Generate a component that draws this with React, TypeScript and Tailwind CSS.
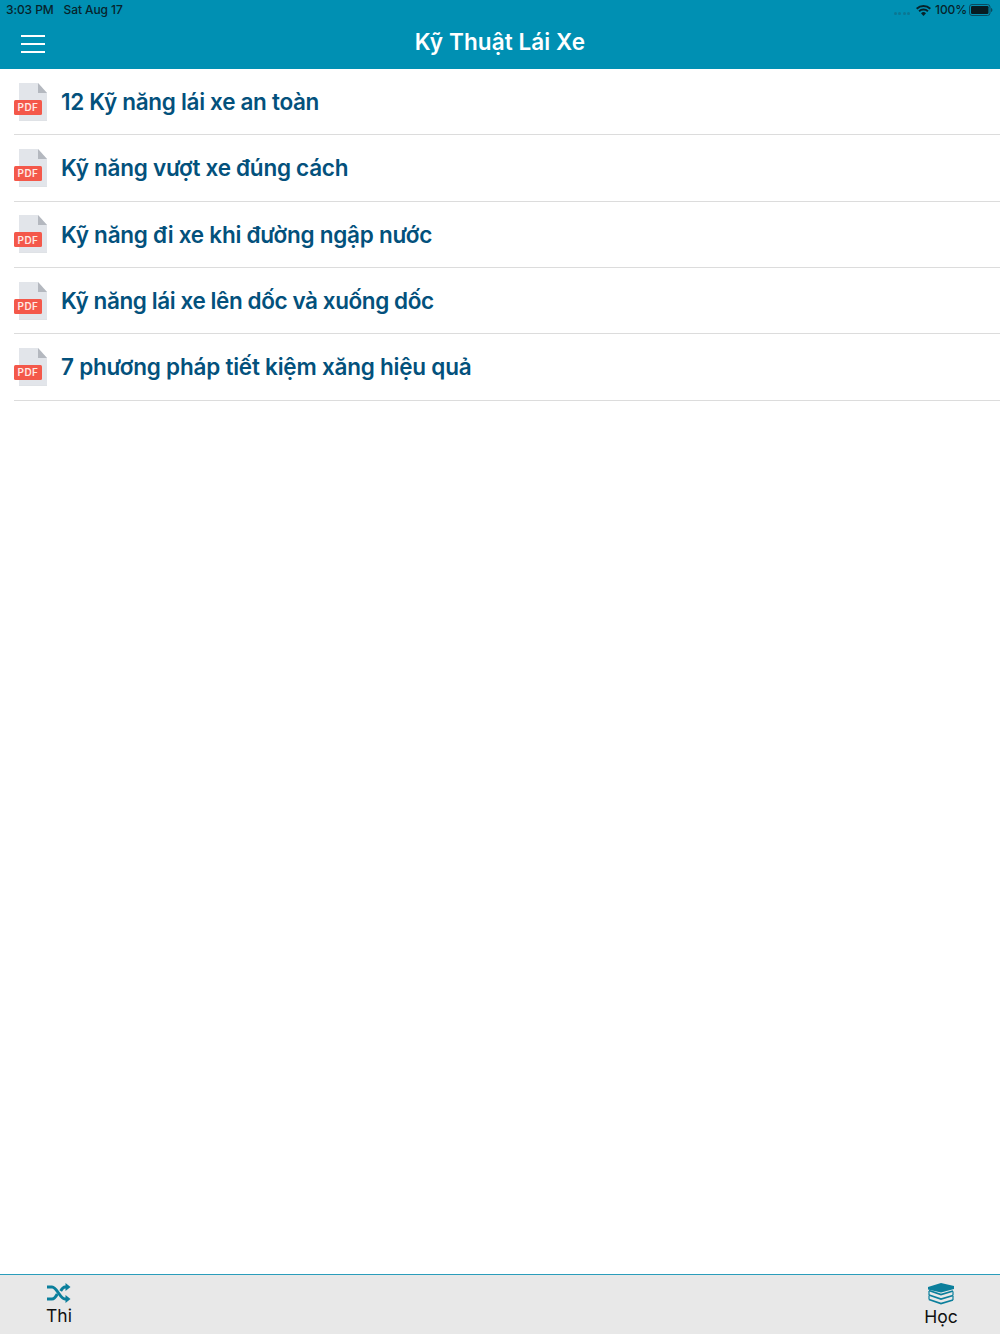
import React from "react";

const items = [
  { label: "12 Kỹ năng lái xe an toàn", tracking: "tracking-[-0.3px]" },
  { label: "Kỹ năng vượt xe đúng cách", tracking: "tracking-[-0.26px]" },
  { label: "Kỹ năng đi xe khi đường ngập nước", tracking: "tracking-[-0.24px]" },
  { label: "Kỹ năng lái xe lên dốc và xuống dốc", tracking: "tracking-[-0.41px]" },
  { label: "7 phương pháp tiết kiệm xăng hiệu quả", tracking: "tracking-[-0.22px]" },
];

function PdfIcon() {
  return (
    <div className="relative w-[34px] h-[38px] shrink-0">
      <svg width="34" height="38" viewBox="0 0 34 38" className="absolute left-0 top-0">
        <path d="M5 0H24L33 10V37.5H5Z" fill="#e2e5ea" />
        <path d="M24 0L33 10H24Z" fill="#b4b8bf" />
        <path d="M5 37H33V37.5H5Z" fill="#cfd3d8" />
        <rect x="0" y="17" width="28" height="15" rx="1.5" fill="#f4584a" />
      </svg>
      <span className="absolute left-0 top-[17px] w-[28px] h-[15px] flex items-center justify-center text-[#ffe9e4] text-[10px] font-semibold leading-none font-['Inter',sans-serif] tracking-[0.4px]">
        PDF
      </span>
    </div>
  );
}

function Row({ label, tracking }: { label: string; tracking: string }) {
  return (
    <div className="h-[66.33px] pl-[15px]">
      <div className="h-full flex items-center gap-[13px] border-b border-[#dcdcdc] -ml-[1px]">
        <PdfIcon />
        <span className={`text-[22.5px] font-semibold text-[#03517c] font-['Inter',sans-serif] leading-none mt-[1px] ${tracking}`}>
          {label}
        </span>
      </div>
    </div>
  );
}

export default function App() {
  return (
    <div className="w-[1000px] h-[1334px] flex flex-col bg-white font-['Inter',sans-serif] overflow-hidden">
      <header className="h-[69px] shrink-0 bg-[#0090b3] flex flex-col">
        <div className="h-[20px] flex items-center justify-between pl-[6px] pr-[7px] text-[12px] tracking-[-0.1px] font-medium text-[#07232b] font-['Inter',sans-serif]">
          <div className="flex gap-[10px]">
            <span>3:03 PM</span>
            <span>Sat Aug 17</span>
          </div>
          <div className="flex items-center gap-[5px]">
            <div className="flex gap-[1.5px] mr-[1px] mt-[7px]">
              <i className="w-[3px] h-[3px] rounded-full bg-[#0b7793]" />
              <i className="w-[3px] h-[3px] rounded-full bg-[#0b7793]" />
              <i className="w-[3px] h-[3px] rounded-full bg-[#0b7793]" />
              <i className="w-[3px] h-[3px] rounded-full bg-[#0b7793]" />
            </div>
            <svg width="15" height="11" viewBox="0 0 15 11" className="-mr-[1px]">
              <path d="M7.5 11L5 8.2a3.6 3.6 0 0 1 5 0Z" fill="#07232b" />
              <path d="M3.7 6.9a5.6 5.6 0 0 1 7.6 0l1.3-1.4a7.5 7.5 0 0 0-10.2 0Z" fill="#07232b" />
              <path d="M1.4 4.4a9 9 0 0 1 12.2 0L15 3a11 11 0 0 0-15 0Z" fill="#07232b" />
            </svg>
            <span>100%</span>
            <svg width="24" height="12" viewBox="0 0 24 12" className="-ml-[3px]">
              <rect x="0.5" y="0.5" width="20.5" height="11" rx="2.5" fill="none" stroke="#0b4a5e" />
              <rect x="2" y="2" width="17.5" height="8" rx="1.2" fill="#071c22" />
              <path d="M22 4v4c.8-.2 1.4-1 1.4-2s-.6-1.8-1.4-2Z" fill="#0b4a5e" />
            </svg>
          </div>
        </div>
        <div className="relative flex-1 flex items-center justify-center">
          <div className="absolute left-[21px] top-[15px] w-[24px] flex flex-col gap-[6px]">
            <i className="block h-[2px] bg-white" />
            <i className="block h-[2px] bg-white" />
            <i className="block h-[2px] bg-white" />
          </div>
          <h1 className="text-white text-[22.5px] font-semibold tracking-[0.1px] leading-none -mt-[5px]">Kỹ Thuật Lái Xe</h1>
        </div>
      </header>

      <main className="flex-1">
        {items.map((t) => (
          <Row key={t.label} label={t.label} tracking={t.tracking} />
        ))}
      </main>

      <footer className="h-[60px] shrink-0 bg-[#e8e8e8] border-t border-[#2a9dbb] flex justify-between pl-[42px] pr-[42px]">
        <div className="w-[34px] flex flex-col items-center pt-[8px]">
          <svg width="24" height="20" viewBox="0 0 24 20" fill="none" stroke="#0b7f9c" strokeWidth="3">
            <path d="M0 4H5C10 4 13 16 18 16H21" />
            <path d="M0 16H5C7.5 16 9 13.5 10.3 11M13.7 8C15 5.8 16 4 18 4H21" />
            <path d="M18.5 0L23.5 4L18.5 8Z" fill="#0b7f9c" strokeWidth="0" />
            <path d="M18.5 12L23.5 16L18.5 20Z" fill="#0b7f9c" strokeWidth="0" />
          </svg>
          <span className="text-[17.5px] leading-none mt-[4px] text-[#111] font-['Inter',sans-serif]">Thi</span>
        </div>
        <div className="w-[34px] flex flex-col items-center pt-[7px]">
          <svg width="28" height="23" viewBox="0 0 28 23" fill="none">
            <path d="M1 5L14 1L27 4V7L14 10.5L1 7.5Z" fill="#0b7f9c" />
            <path d="M2 8.5L14 12.5L26 9M2 13L14 17L26 13.5M2 17.5L14 21.5L26 18" stroke="#0b7f9c" strokeWidth="1.8" />
            <path d="M2 9V13M2 13.5V17.5M26 9.5V13.5M26 14V18" stroke="#0b7f9c" strokeWidth="1.2" />
          </svg>
          <span className="text-[17.5px] leading-none mt-[3px] text-[#111] font-['Inter',sans-serif]">Học</span>
        </div>
      </footer>
    </div>
  );
}
